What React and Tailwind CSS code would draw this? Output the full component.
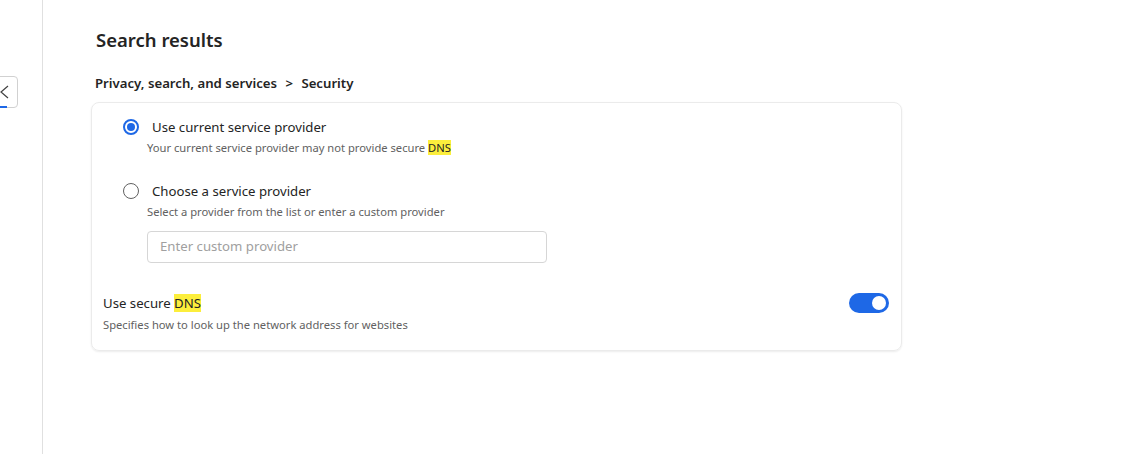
import React from 'react';

const font = { fontFamily: '"Noto Sans", "Open Sans", sans-serif' };

function Radio({ checked }) {
    return checked ? (
        <span className="flex h-4 w-4 items-center justify-center rounded-full border-2 border-[#1e68e6]">
            <span className="h-[8px] w-[8px] rounded-full bg-[#1e68e6]" />
        </span>
    ) : (
        <span className="h-4 w-4 rounded-full border border-[#616161]" />
    );
}

function Mark({ children }) {
    return <span className="bg-[#fcee3c] text-[#242424]">{children}</span>;
}

export default function App() {
    return (
        <div className="flex h-[454px] w-[1125px] overflow-hidden bg-white text-[#242424]" style={font}>
            <div className="w-[43px] shrink-0 border-r border-[#e0e0e0] pt-[76px]">
                <div className="relative -ml-[16px] flex h-[32px] w-[34px] items-center justify-end rounded-[4px] border border-[#d1d1d1] pr-[8px]">
                    <svg width="10" height="16" viewBox="0 0 10 16" className="-mr-[1px]">
                        <path d="M8 2 L1 8 L8 14" fill="none" stroke="#424242" strokeWidth="1.2" />
                    </svg>
                    <span className="absolute bottom-[-1px] left-[14px] h-[2px] w-[8px] bg-[#1e68e6]" />
                </div>
            </div>

            <div className="ml-[48px] flex w-[811px] flex-col">
                <h1 className="ml-[5px] mt-[26px] text-[18.5px] font-semibold leading-[28px]">Search results</h1>
                <div className="ml-[4px] mt-[19px] text-[13.2px] font-semibold leading-[20px]">
                    Privacy, search, and services <span className="mx-[5px]">&gt;</span> Security
                </div>

                <div className="mt-[9px] flex h-[249px] flex-col rounded-[8px] border border-[#ebebeb] shadow-[0_1px_2px_rgba(0,0,0,0.08)]">
                    <div className="ml-[31px] mt-[14px] flex items-center gap-[13px]">
                        <Radio checked />
                        <span className="text-[13.2px] leading-[20px]">Use current service provider</span>
                    </div>
                    <div className="ml-[55px] mt-[3px] text-[11.2px] leading-[16px] text-[#616161]">
                        Your current service provider may not provide secure <Mark>DNS</Mark>
                    </div>

                    <div className="ml-[31px] mt-[25px] flex items-center gap-[13px]">
                        <Radio />
                        <span className="text-[13.2px] leading-[20px]">Choose a service provider</span>
                    </div>
                    <div className="ml-[55px] mt-[3px] text-[11.2px] leading-[16px] text-[#616161]">
                        Select a provider from the list or enter a custom provider
                    </div>
                    <div className="ml-[55px] mt-[11px] flex h-[32px] w-[400px] items-center rounded-[4px] border border-[#d6d6d6] px-[12px] text-[13.2px] text-[#a0a0a0]">
                        Enter custom provider
                    </div>

                    <div className="ml-[11px] mr-[12px] mt-[30px] flex items-start justify-between">
                        <div className="flex flex-col">
                            <span className="text-[13.2px] leading-[20px]">Use secure <Mark>DNS</Mark></span>
                            <span className="mt-[4px] text-[11.2px] leading-[16px] text-[#616161]">
                                Specifies how to look up the network address for websites
                            </span>
                        </div>
                        <div className="flex h-[20px] w-[40px] items-center justify-end rounded-full bg-[#1e68e6] px-[3px]">
                            <span className="h-[14px] w-[14px] rounded-full bg-white" />
                        </div>
                    </div>
                </div>
            </div>
        </div>
    );
}
